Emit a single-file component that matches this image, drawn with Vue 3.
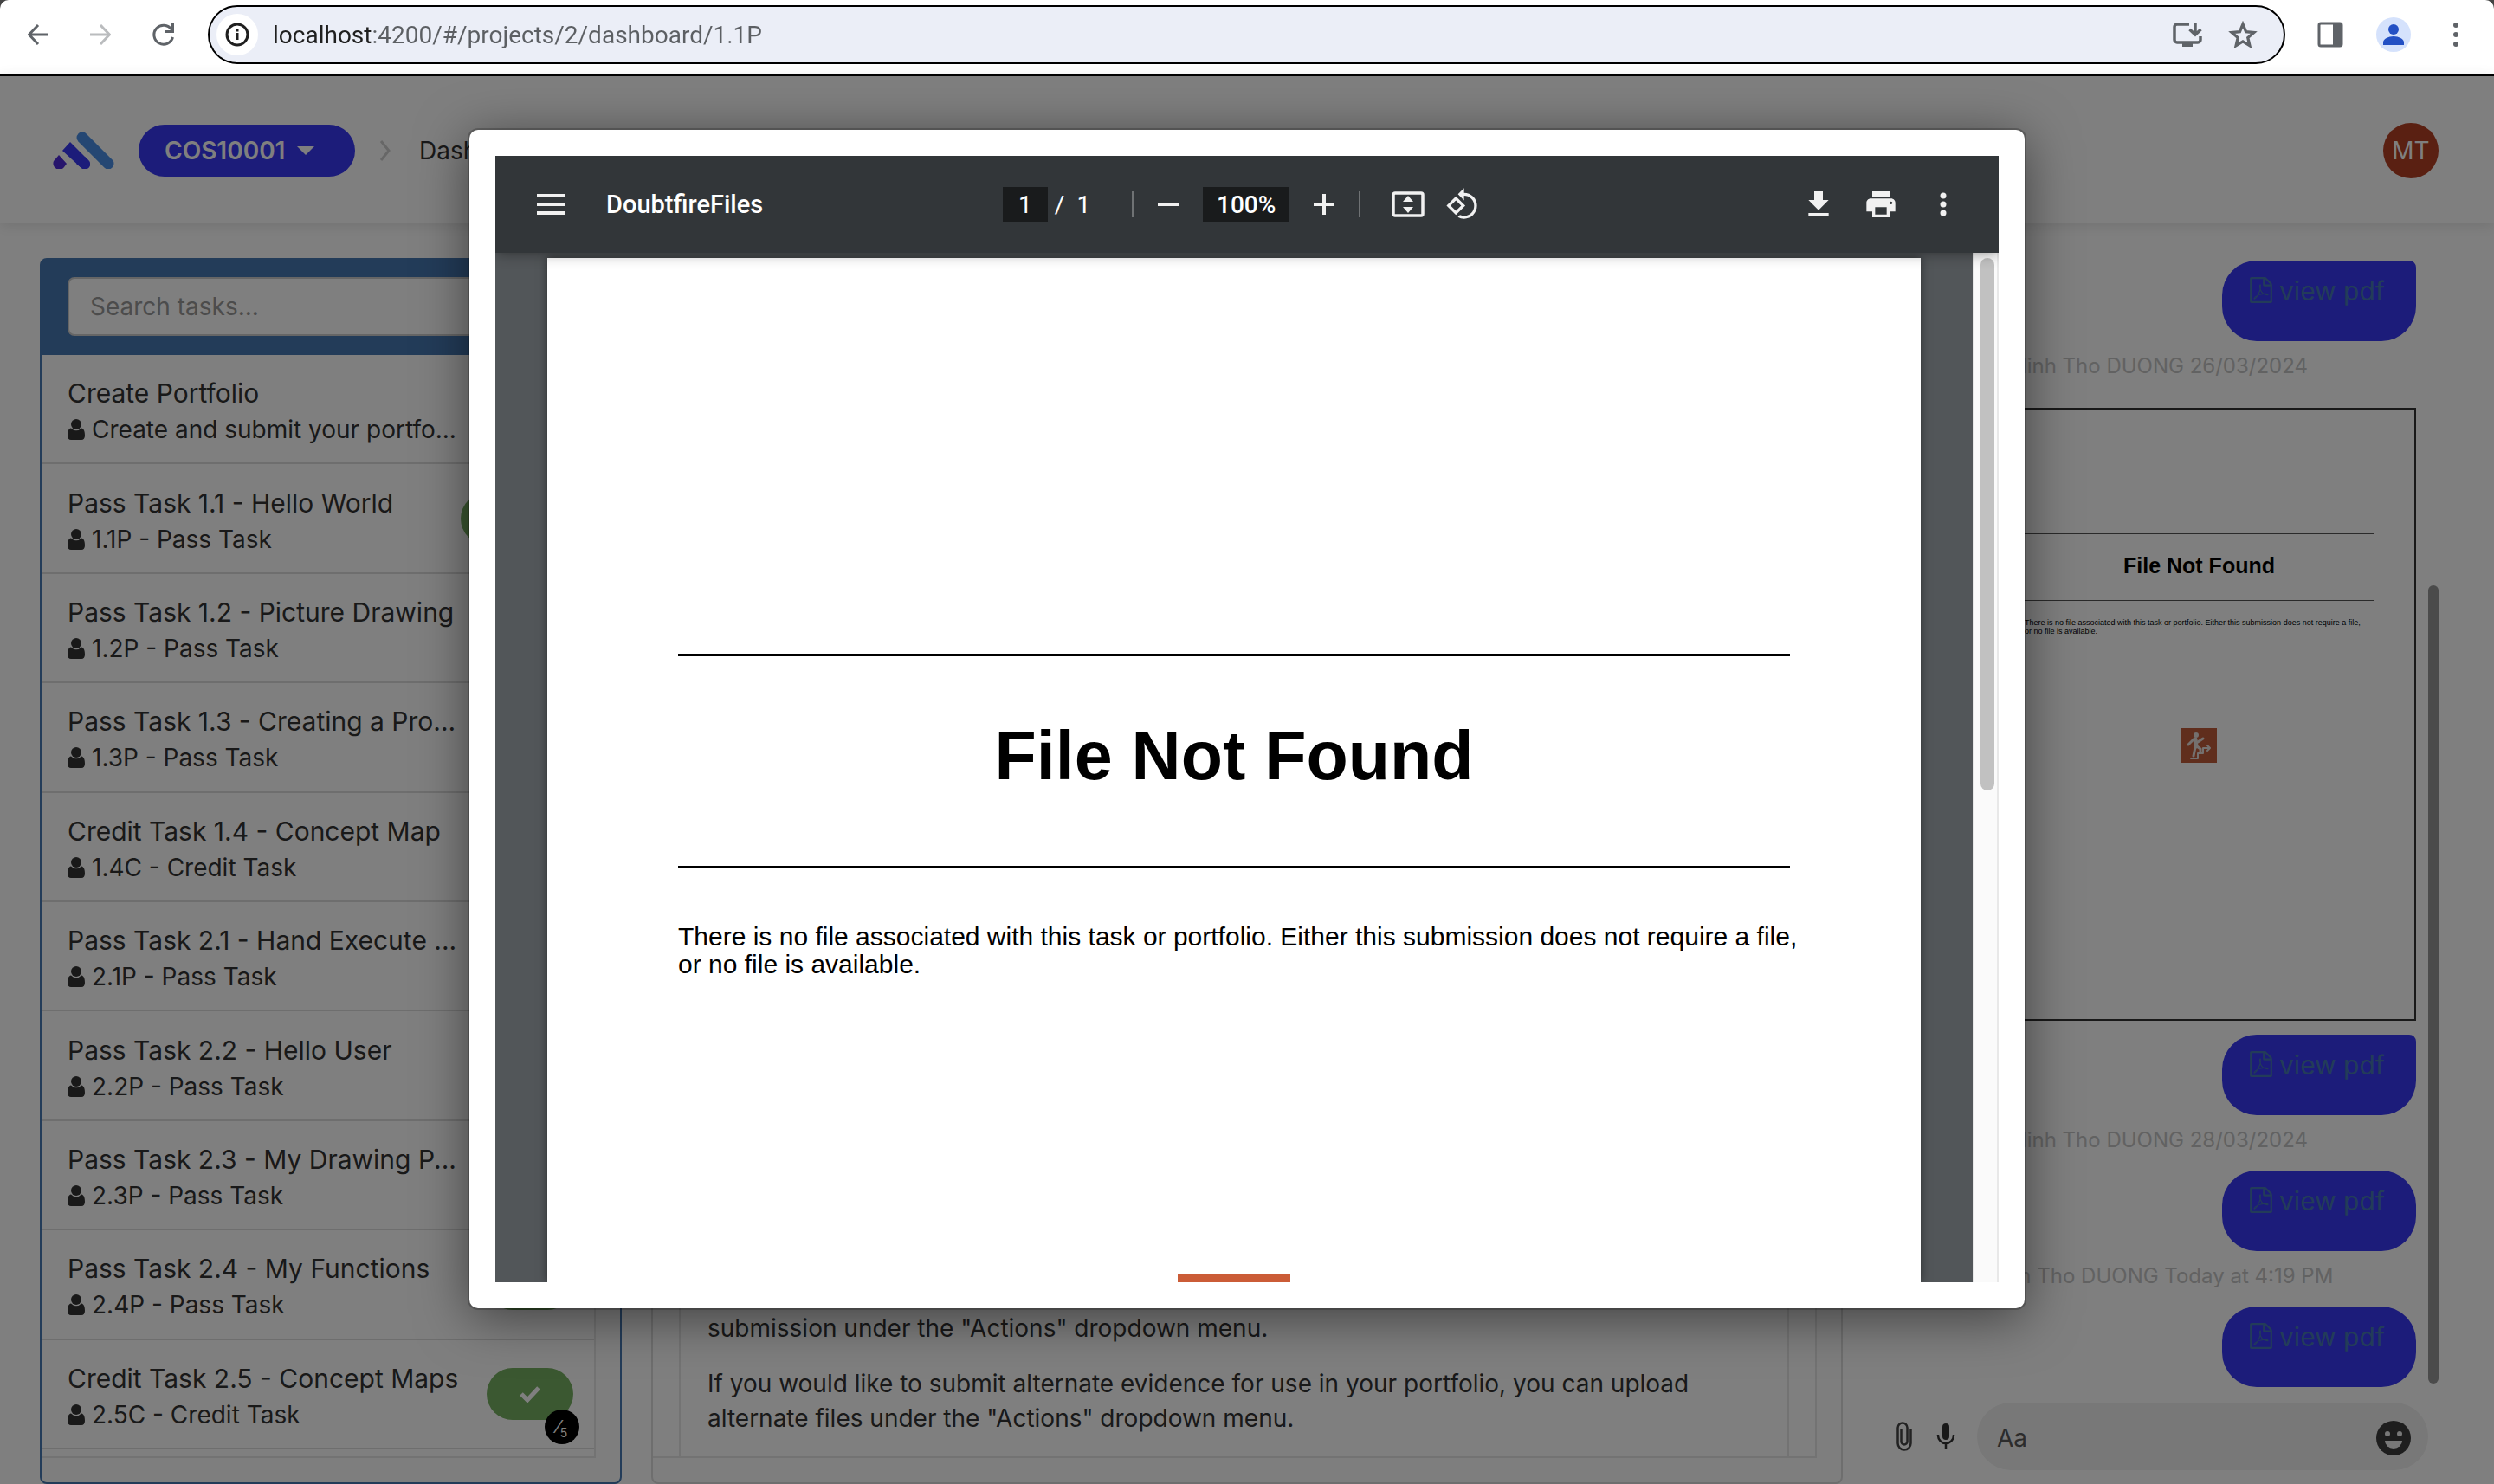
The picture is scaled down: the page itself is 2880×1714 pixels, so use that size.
<script setup>
import { ref } from 'vue'

const address = ref('localhost:4200/#/projects/2/dashboard/1.1P')
const pageNumber = ref('1')
const zoomLevel = ref('100%')
const search = ref('')
const draft = ref('')

const tasks = [
  { name: 'Create Portfolio', detail: 'Create and submit your portfo...' },
  { name: 'Pass Task 1.1 - Hello World', detail: '1.1P - Pass Task', status: 'selected' },
  { name: 'Pass Task 1.2 - Picture Drawing', detail: '1.2P - Pass Task' },
  { name: 'Pass Task 1.3 - Creating a Pro...', detail: '1.3P - Pass Task' },
  { name: 'Credit Task 1.4 - Concept Map', detail: '1.4C - Credit Task' },
  { name: 'Pass Task 2.1 - Hand Execute ...', detail: '2.1P - Pass Task' },
  { name: 'Pass Task 2.2 - Hello User', detail: '2.2P - Pass Task' },
  { name: 'Pass Task 2.3 - My Drawing P...', detail: '2.3P - Pass Task' },
  { name: 'Pass Task 2.4 - My Functions', detail: '2.4P - Pass Task', status: 'done' },
  { name: 'Credit Task 2.5 - Concept Maps', detail: '2.5C - Credit Task', status: 'done', outOf: 5 },
]

const messages = [
  { kind: 'pdf', first: true },
  { kind: 'time', text: 'Minh Tho DUONG 26/03/2024' },
  { kind: 'preview' },
  { kind: 'pdf', first: true },
  { kind: 'time', text: 'Minh Tho DUONG 28/03/2024' },
  { kind: 'pdf' },
  { kind: 'time', text: 'Minh Tho DUONG Today at 4:19 PM' },
  { kind: 'pdf' },
]
</script>

<template>
  <div class="window">
    <header class="browser">
      <nav class="nav">
        <button aria-label="Back">
          <svg width="24" height="24" viewBox="0 0 24 24"><path d="M12 1 1.500 12 12 23M2 12h22" fill="none" stroke="#5f6368" stroke-width="3" /></svg>
        </button>
        <button aria-label="Forward">
          <svg width="24" height="24" viewBox="0 0 24 24"><path d="M12 1l10.500 11L12 23M22 12H0" fill="none" stroke="#babcbe" stroke-width="3" /></svg>
        </button>
        <button aria-label="Reload">
          <svg width="26" height="26" viewBox="0 0 26 26"><path d="M22 7A11 11 0 1 0 23.500 16" fill="none" stroke="#5f6368" stroke-width="3" /><path d="M25 0v11H14V8h8V0z" fill="#5f6368" /></svg>
        </button>
      </nav>
      <div class="omnibox">
        <button class="site-info" aria-label="Site information">
          <svg width="28" height="28" viewBox="0 0 28 28"><circle cx="14" cy="14" r="12" fill="none" stroke="#1f1f1f" stroke-width="3" /><path d="M12.500 12h3v8h-3zM12.500 7.500h3v3h-3z" fill="#1f1f1f" /></svg>
        </button>
        <input v-model="address" class="address" aria-label="Address" />
        <button aria-label="Install">
          <svg width="34" height="30" viewBox="0 0 34 30"><path d="M19 3H5a3 3 0 0 0-3 3v15a3 3 0 0 0 3 3h24a3 3 0 0 0 3-3v-4" fill="none" stroke="#5f6368" stroke-width="3.500" /><path d="M11 24h12v5H11z" fill="#5f6368" /><path d="M26 1v13M19.500 9l6.500 6 6.500-6" fill="none" stroke="#5f6368" stroke-width="3.500" /></svg>
        </button>
        <button aria-label="Bookmark">
          <svg width="34" height="32" viewBox="0 0 34 32"><path d="M17 4l3.600 8.700 9.200.8-7 6.100 2.100 9.100L17 23.900l-7.900 4.800 2.100-9.100-7-6.100 9.200-.8z" fill="none" stroke="#5f6368" stroke-width="3.300" /></svg>
        </button>
      </div>
      <div class="browser-actions">
        <button aria-label="Side panel">
          <svg width="30" height="30" viewBox="0 0 30 30"><rect x="2" y="2" width="26" height="26" rx="2" fill="none" stroke="#5f6368" stroke-width="3" /><path d="M18 2h10v26H18z" fill="#5f6368" /></svg>
        </button>
        <button class="profile" aria-label="Profile">
          <svg width="24" height="24" viewBox="0 0 24 24"><circle cx="12" cy="6" r="6" fill="#2350c4" /><path d="M0 24v-3c0-4 6-7 12-7s12 3 12 7v3z" fill="#2350c4" /></svg>
        </button>
        <button aria-label="Menu">
          <svg width="8" height="28" viewBox="0 0 8 28" fill="#5f6368"><circle cx="4" cy="3" r="3" /><circle cx="4" cy="14" r="3" /><circle cx="4" cy="25" r="3" /></svg>
        </button>
      </div>
    </header>

    <div class="app">
      <header class="topbar">
        <svg class="logo" width="74" height="42" viewBox="0 0 74 42">
          <path d="M35 6 65 36" stroke="#4a8fe6" stroke-width="13" stroke-linecap="round" />
          <path d="M21 11 42 32a6 6 0 0 1-8 9L12 21z" fill="#3838f4" />
          <path d="M8 26l9 10-3 4a7 7 0 0 1-12-7z" fill="#4f2bd8" />
          <path d="M34 41a6 6 0 0 0 8-9l-4-4-10 8z" fill="#3838f4" />
        </svg>
        <button class="unit">COS10001
          <svg width="20" height="10" viewBox="0 0 20 10"><path d="M0 0h20L10 10z" fill="#fff" /></svg>
        </button>
        <svg class="crumb" width="14" height="24" viewBox="0 0 14 24"><path d="M2 1l9 11-9 11" fill="none" stroke="#cfcfcf" stroke-width="3" /></svg>
        <span class="crumb-text">Dashboard</span>
        <button class="avatar">MT</button>
      </header>

      <main class="columns">
        <section class="card tasks">
          <div class="search">
            <input v-model="search" placeholder="Search tasks..." aria-label="Search tasks" />
          </div>
          <ul class="task-list">
            <li v-for="task in tasks" :key="task.name" class="task">
              <div class="task-text">
                <div class="task-name">{{ task.name }}</div>
                <div class="task-detail">
                  <svg width="20" height="24" viewBox="0 0 20 24" fill="#333"><circle cx="10" cy="6" r="6" /><path d="M4 10.500a8 8 0 0 0 12 0c3 .5 4 4 4 8.500 0 3-1.500 5-4 5H4c-2.500 0-4-2-4-5 0-4.500 1-8 4-8.500z" /></svg>
                  {{ task.detail }}
                </div>
              </div>
              <span v-if="task.status" class="pill" :class="{ wide: task.status === 'selected' }">
                <svg width="24" height="20" viewBox="0 0 24 20"><path d="M2 10l7 7L22 3" fill="none" stroke="#fff" stroke-width="5" /></svg>
                <span v-if="task.outOf" class="grade">⁄<sub>{{ task.outOf }}</sub></span>
              </span>
            </li>
          </ul>
        </section>

        <section class="card details">
          <div class="details-frame">
            <div class="details-body">
              <p>submission under the "Actions" dropdown menu.</p>
              <p>If you would like to submit alternate evidence for use in your portfolio, you can upload alternate files under the "Actions" dropdown menu.</p>
            </div>
          </div>
        </section>

        <section class="chat">
          <div class="chat-scroll">
            <div class="messages">
              <template v-for="(message, index) in messages" :key="index">
                <a v-if="message.kind === 'pdf'" href="#" class="bubble" :class="{ first: message.first }">
                  <svg width="26" height="30" viewBox="0 0 1536 1792"><path d="M1468 380q28 28 48 76t20 88v1152q0 40-28 68t-68 28h-1344q-40 0-68-28t-28-68v-1600q0-40 28-68t68-28h896q40 0 88 20t76 48zm-444-244v376h376q-10-29-22-41l-313-313q-12-12-41-22zm384 1528v-1024h-416q-40 0-68-28t-28-68v-416h-768v1536h1280zm-514-593q33 26 84 56 59-7 117-7 147 0 177 49 16 22 2 52 0 1-1 2l-2 2v1q-6 38-71 38-48 0-115-20t-130-53q-221 24-392 83-153 262-242 262-15 0-28-7l-24-12q-1-1-6-5-10-10-6-36 9-40 56-91.500t132-96.500q14-9 23 6 2 2 2 4 52-85 107-197 68-136 104-262-24-82-30.500-159.500t6.500-127.500q11-40 42-40h22q23 0 35 15 18 21 9 68-2 6-4 8 1 3 1 8v30q-2 123-14 192 55 164 146 238zm-576 411q52-24 137-158-51 40-87.500 84t-49.500 74zm398-920q-15 42-2 132 1-7 7-44 0-3 7-43 1-4 4-8-1-1-1-2t-1-2q-1-1-1-3-1-22-13-36 0 1-1 2v2zm-124 661q135-54 284-81-2-1-13-9.500t-16-13.500q-76-67-127-176-27 86-83 197-30 56-45 83zm646-16q-24-24-140-24 76 28 124 28 14 0 18-1 0-1-2-3z" fill="currentColor" /></svg>
                  view pdf
                </a>
                <p v-else-if="message.kind === 'time'" class="time">{{ message.text }}</p>
                <article v-else class="preview">
                  <h3>File Not Found</h3>
                  <p>There is no file associated with this task or portfolio. Either this submission does not require a file, or no file is available.</p>
                  <svg width="41" height="40" viewBox="0 0 41 40">
                    <path d="M0 0h41v40H0z" fill="#c05c3a" />
                    <g fill="none" stroke="#e8e0dc" stroke-linecap="round" stroke-linejoin="round">
                      <path d="M16 13l1 8" stroke-width="5" />
                      <path d="M14 13l-6 6M19 16l6-4M18 21l4 3v4M16 22l-2 10" stroke-width="3" />
                      <path d="M11 35h8v-6h6v-6h7M30 20l3 3-3 3" stroke-width="2" />
                    </g>
                    <circle cx="17" cy="8" r="3" fill="#e8e0dc" />
                  </svg>
                </article>
              </template>
            </div>
            <div class="chat-thumb"></div>
          </div>
          <form class="composer" @submit.prevent>
            <button type="button" aria-label="Attach file">
              <svg width="18" height="34" viewBox="0 0 18 34"><path d="M16.500 9v16a7.500 7.500 0 0 1-15 0V7a5.500 5.500 0 0 1 11 0v16a3.500 3.500 0 0 1-7 0V9" fill="none" stroke="#444" stroke-width="2.500" /></svg>
            </button>
            <button type="button" aria-label="Record audio">
              <svg width="22" height="30" viewBox="0 0 22 30"><rect x="7" y="0" width="8" height="19" rx="4" fill="#333" /><path d="M2 13v1a9 9 0 0 0 18 0v-1M11 23v6" fill="none" stroke="#333" stroke-width="2.500" /></svg>
            </button>
            <div class="compose-box">
              <input v-model="draft" placeholder="Aa" aria-label="Message" />
              <button type="button" aria-label="Emoji">
                <svg width="40" height="40" viewBox="0 0 40 40"><circle cx="20" cy="20" r="20" fill="#3c3c3c" /><circle cx="13" cy="15" r="3" fill="#f0f0f0" /><circle cx="27" cy="15" r="3" fill="#f0f0f0" /><path d="M10 23h20a10 9 0 0 1-20 0z" fill="#f0f0f0" /></svg>
              </button>
            </div>
          </form>
        </section>
      </main>

      <div class="overlay">
        <div class="modal" role="dialog" aria-label="DoubtfireFiles">
          <div class="viewer">
            <div class="toolbar">
              <div class="tools-left">
                <button aria-label="Menu">
                  <svg width="32" height="24" viewBox="0 0 32 24"><path d="M0 0h32v4H0zM0 10h32v4H0zM0 20h32v4H0z" fill="#f1f1f1" /></svg>
                </button>
                <span class="title">DoubtfireFiles</span>
              </div>
              <div class="tools-center">
                <input v-model="pageNumber" class="page-number" aria-label="Page number" />
                <span class="page-total"><span>/</span><span>1</span></span>
                <i class="divider"></i>
                <button aria-label="Zoom out">
                  <svg width="24" height="24" viewBox="0 0 24 24"><path d="M0 10h24v4H0z" fill="#f1f1f1" /></svg>
                </button>
                <input v-model="zoomLevel" class="zoom" aria-label="Zoom level" />
                <button aria-label="Zoom in">
                  <svg width="24" height="24" viewBox="0 0 24 24"><path d="M0 10h10V0h4v10h10v4H14v10h-4V14H0z" fill="#f1f1f1" /></svg>
                </button>
                <i class="divider"></i>
                <button class="fit" aria-label="Fit to page">
                  <svg width="38" height="30" viewBox="0 0 38 30"><rect x="2" y="2" width="34" height="26" rx="2" fill="none" stroke="#f1f1f1" stroke-width="3.500" /><path d="M13 12l6-7 6 7zM13 18h12l-6 7z" fill="#f1f1f1" /></svg>
                </button>
                <button aria-label="Rotate">
                  <svg width="40" height="40" viewBox="0 0 24 24"><path d="M7.340 6.410.860 12.900l6.490 6.480 6.490-6.480zM3.690 12.900l3.660-3.660L11 12.900l-3.660 3.660zM19.360 6.640C17.610 4.880 15.300 4 13 4V.760L8.760 5 13 9.240V6c1.790 0 3.580.680 4.950 2.050 2.730 2.730 2.730 7.170 0 9.900C16.580 19.320 14.790 20 13 20c-.970 0-1.940-.210-2.840-.610l-1.490 1.490C10.020 21.620 11.510 22 13 22c2.300 0 4.610-.880 6.360-2.640 3.520-3.510 3.520-9.210 0-12.720z" fill="#f1f1f1" fill-rule="evenodd" /></svg>
                </button>
              </div>
              <div class="tools-right">
                <button aria-label="Download">
                  <svg width="40" height="40" viewBox="0 0 24 24"><path d="M19 9h-4V3H9v6H5l7 7zM5 18v2h14v-2z" fill="#f1f1f1" /></svg>
                </button>
                <button aria-label="Print">
                  <svg width="40" height="40" viewBox="0 0 24 24"><path d="M19 8H5c-1.660 0-3 1.340-3 3v6h4v4h12v-4h4v-6c0-1.660-1.340-3-3-3zm-3 11H8v-5h8zm3-7c-.550 0-1-.450-1-1s.450-1 1-1 1 .450 1 1-.450 1-1 1zm-1-9H6v4h12z" fill="#f1f1f1" /></svg>
                </button>
                <button aria-label="More actions">
                  <svg width="40" height="40" viewBox="0 0 24 24" fill="#f1f1f1"><circle cx="12" cy="6" r="2.100" /><circle cx="12" cy="12" r="2.100" /><circle cx="12" cy="18" r="2.100" /></svg>
                </button>
              </div>
            </div>
            <div class="document">
              <article class="page">
                <h1>File Not Found</h1>
                <p>There is no file associated with this task or portfolio. Either this submission does not require a file, or no file is available.</p>
                <div class="page-figure"></div>
              </article>
              <div class="track"><div class="thumb"></div></div>
            </div>
          </div>
        </div>
      </div>
    </div>
  </div>
</template>

<style>
body {
  margin: 0;
  background: #444;
}
</style>

<style scoped>
* {
  box-sizing: border-box;
}
.window {
  display: flex;
  flex-direction: column;
  height: 100vh;
  overflow: hidden;
  font-family: Inter, "Liberation Sans", sans-serif;
  font-size: 28px;
  color: #333;
}
button {
  display: flex;
  align-items: center;
  justify-content: center;
  padding: 0;
  border: 0;
  background: none;
  font: inherit;
  color: inherit;
}
input {
  min-width: 0;
  padding: 0;
  border: 0;
  outline: 0;
  background: none;
  font: inherit;
  color: inherit;
}
svg {
  flex: none;
  display: block;
}
p, h1, h3, ul {
  margin: 0;
  padding: 0;
}

/* Browser bar */
.browser {
  flex: none;
  display: flex;
  align-items: center;
  height: 88px;
  padding: 0 40px 6px 32px;
  border-bottom: 2px solid #000;
  border-radius: 10px 10px 0 0;
  background: #fff;
}
.nav {
  display: flex;
  align-items: center;
  gap: 48px;
  width: 208px;
}
.omnibox {
  flex: 1;
  display: flex;
  align-items: center;
  gap: 30px;
  height: 68px;
  padding: 0 30px 0 8px;
  border: 2px solid #000;
  border-radius: 34px;
  background: #ebeef7;
}
.site-info {
  width: 48px;
  height: 48px;
  border-radius: 50%;
  background: #fff;
}
.address {
  flex: 1;
  margin-left: -13px;
  background: linear-gradient(90deg, #1f1f1f 115px, #5c5f63 115px);
  background-clip: text;
  -webkit-text-fill-color: transparent;
  font-family: Roboto, sans-serif;
}
.browser-actions {
  display: flex;
  align-items: center;
  gap: 38px;
  margin-left: 37px;
}
.browser-actions > :last-child {
  margin-left: 10px;
}
.profile {
  width: 40px;
  height: 40px;
  border-radius: 50%;
  background: #d5e2fc;
}

/* Application */
.app {
  flex: 1;
  min-height: 0;
  position: relative;
  display: flex;
  flex-direction: column;
  background: #fff;
}
.topbar {
  flex: none;
  display: flex;
  align-items: center;
  height: 170px;
  padding: 2px 64px 0 60px;
  box-shadow: 0 2px 16px rgba(0, 0, 0, .12);
}
.unit {
  justify-content: flex-start;
  gap: 14px;
  width: 250px;
  height: 60px;
  margin-left: 26px;
  padding-left: 30px;
  border-radius: 30px;
  background: #3838f4;
  color: #fff;
  font-weight: 600;
}
.crumb {
  margin: 0 32px 0 28px;
}
.avatar {
  width: 64px;
  height: 64px;
  margin-left: auto;
  border-radius: 50%;
  background: #b44024;
  color: #fff;
}
.columns {
  flex: 1;
  min-height: 0;
  display: grid;
  grid-template-columns: 21fr 43fr 21fr;
  grid-template-rows: minmax(0, 1fr);
  gap: 34px;
  padding: 40px 46px 0;
}
.columns > * {
  min-width: 0;
}
.card {
  display: flex;
  flex-direction: column;
  border: 2px solid #ddd;
  border-radius: 8px;
  background: #fcfcfc;
}
.tasks {
  border-color: #4678b2;
}
.search {
  flex: none;
  display: flex;
  height: 110px;
  padding: 20px 30px 22px;
  background: #4678b2;
}
.search input {
  flex: 1;
  padding: 0 24px;
  border: 2px solid #ccc;
  border-radius: 8px;
  background: #fff;
}
.search input::placeholder {
  color: #999;
}
.task-list {
  flex: 1;
  display: flex;
  flex-direction: column;
  margin: 0 28px 28px 0;
  padding-bottom: 8px;
  border-right: 2px solid #e6e6e6;
  border-bottom: 2px solid #e6e6e6;
  background: #fff;
  list-style: none;
}
.task {
  flex: 1;
  display: flex;
  align-items: center;
  justify-content: space-between;
  padding: 0 24px 0 30px;
  border-bottom: 2px solid #ddd;
}
.task-text {
  padding-top: 6px;
  white-space: nowrap;
}
.task-name {
  font-size: 30px;
  line-height: 42px;
}
.task-detail {
  display: flex;
  align-items: center;
  gap: 8px;
  line-height: 42px;
}
.pill {
  flex: none;
  position: relative;
  display: flex;
  align-items: center;
  justify-content: center;
  width: 100px;
  height: 60px;
  border-radius: 30px;
  background: #76b062;
}
.pill.wide {
  width: 160px;
  margin-right: -30px;
}
.grade {
  position: absolute;
  right: -7px;
  bottom: -28px;
  width: 40px;
  height: 40px;
  border-radius: 50%;
  background: #000;
  color: #fff;
  font-size: 20px;
  line-height: 40px;
  text-align: center;
}
.grade sub {
  font-size: 14px;
  line-height: 0;
}
.details {
  justify-content: flex-end;
}
.details-frame {
  flex: 1;
  margin: 0 28px 28px 0;
  padding: 0 30px;
  border-right: 2px solid #e6e6e6;
  border-bottom: 2px solid #e6e6e6;
  background: #fff;
}
.details-body {
  display: flex;
  flex-direction: column;
  justify-content: flex-end;
  gap: 24px;
  height: 100%;
  padding: 0 90px 24px 31px;
  border: solid #e6e6e6;
  border-width: 0 2px;
  line-height: 40px;
}
.chat {
  display: flex;
  flex-direction: column;
  padding-bottom: 16px;
}
.chat-scroll {
  flex: 1;
  min-height: 0;
  display: flex;
  gap: 14px;
  padding: 0 18px;
}
.messages {
  flex: 1;
  display: flex;
  flex-direction: column;
  align-items: flex-end;
  justify-content: flex-end;
}
.chat-thumb {
  align-self: flex-end;
  width: 12px;
  height: calc(71% - 4px);
  margin-bottom: 4px;
  border-radius: 6px;
  background: #969696;
}
.bubble {
  flex: none;
  display: flex;
  gap: 8px;
  width: 224px;
  height: 93px;
  padding: 17px 32px;
  border-radius: 40px;
  background: #3838f4;
  color: #4678b2;
  font-size: 30px;
  line-height: 36px;
  text-decoration: none;
  white-space: nowrap;
}
.bubble.first {
  border-top-right-radius: 8px;
}
.bubble svg {
  margin-top: 2px;
}
.time {
  align-self: stretch;
  margin-bottom: 6px;
  padding-left: 14px;
  color: #c4c4c4;
  font-size: 24px;
  line-height: 58px;
  text-align: center;
}
.preview {
  flex: none;
  display: flex;
  flex-direction: column;
  align-items: center;
  width: 501px;
  height: 708px;
  margin: 13px 0 16px;
  padding: 143px 47px 0;
  border: 2px solid #333;
  font-family: "Liberation Sans", sans-serif;
  color: #000;
}
.preview h3 {
  align-self: stretch;
  padding-bottom: 4px;
  border: solid #555;
  border-width: 1px 0;
  font-size: 25px;
  line-height: 72px;
  text-align: center;
}
.preview p {
  margin: 20px 0 107px;
  padding-right: 14px;
  font-size: 9px;
  line-height: 10px;
}
.composer {
  flex: none;
  display: flex;
  align-items: center;
  gap: 28px;
  height: 78px;
  margin-top: 18px;
  padding: 0 30px 0 28px;
}
.composer > :nth-child(2) {
  margin-right: -3px;
}
.compose-box {
  flex: 1;
  display: flex;
  align-items: center;
  height: 78px;
  padding: 4px 20px 0 23px;
  border-radius: 39px;
  background: #f0f0f0;
}
.compose-box input {
  flex: 1;
}
.compose-box input::placeholder {
  color: #595959;
}

/* Dialog */
.overlay {
  position: absolute;
  inset: 0;
  padding-top: 62px;
  background: rgba(0, 0, 0, .5);
}
.modal {
  max-width: 1796px;
  height: 87%;
  margin: 0 auto;
  padding: 30px;
  border-radius: 10px;
  background: #fff;
  box-shadow: 0 0 0 2px rgba(0, 0, 0, .2), 0 10px 60px rgba(0, 0, 0, .5);
}
.viewer {
  display: flex;
  flex-direction: column;
  height: 100%;
  overflow: hidden;
  background: #525659;
}
.toolbar {
  flex: none;
  position: relative;
  z-index: 1;
  display: grid;
  grid-template-columns: 1fr auto 1fr;
  align-items: center;
  height: 112px;
  padding: 0 44px 0 48px;
  background: #323639;
  box-shadow: 0 0 16px rgba(0, 0, 0, .45);
  color: #fff;
  font-family: Roboto, sans-serif;
}
.tools-left, .tools-center, .tools-right {
  display: flex;
  align-items: center;
}
.tools-left {
  gap: 48px;
}
.title {
  font-size: 29px;
  font-weight: 500;
}
.tools-center {
  padding-right: 17px;
}
.tools-center input {
  height: 40px;
  background: #191b1c;
  text-align: center;
}
.page-number {
  width: 52px;
}
.page-total {
  display: flex;
  gap: 14px;
  margin-left: 8px;
}
.divider {
  width: 2px;
  height: 30px;
  margin: 0 28px;
  background: #6f7274;
}
.page-total + .divider {
  margin-left: 48px;
}
.zoom {
  width: 100px;
  margin: 0 28px;
  font-weight: 500;
}
.fit {
  margin: 0 24px 0 8px;
}
.tools-right {
  justify-content: flex-end;
  gap: 32px;
}
.document {
  flex: 1;
  min-height: 0;
  display: flex;
  overflow: hidden;
}
.page {
  flex: 1;
  display: flex;
  flex-direction: column;
  align-items: center;
  margin: 6px 60px 0;
  padding: 457px 151px 0;
  background: #fff;
  box-shadow: 0 0 10px rgba(0, 0, 0, .5);
  font-family: "Liberation Sans", sans-serif;
  color: #000;
}
.page h1 {
  align-self: stretch;
  padding-bottom: 12px;
  border: solid #000;
  border-width: 3px 0;
  font-size: 79px;
  line-height: 230px;
  text-align: center;
}
.page p {
  align-self: stretch;
  margin: 63px -20px 341px 0;
  font-size: 30px;
  line-height: 32px;
}
.page-figure {
  flex: none;
  width: 130px;
  height: 130px;
  background: #cb5c37;
}
.track {
  flex: none;
  width: 30px;
  padding: 6px 6px 0 8px;
  border: solid #e8e8e8;
  border-width: 0 2px 0 1px;
  background: #fafafa;
}
.thumb {
  width: 16px;
  height: 52%;
  border-radius: 8px;
  background: #c1c1c1;
}
</style>
